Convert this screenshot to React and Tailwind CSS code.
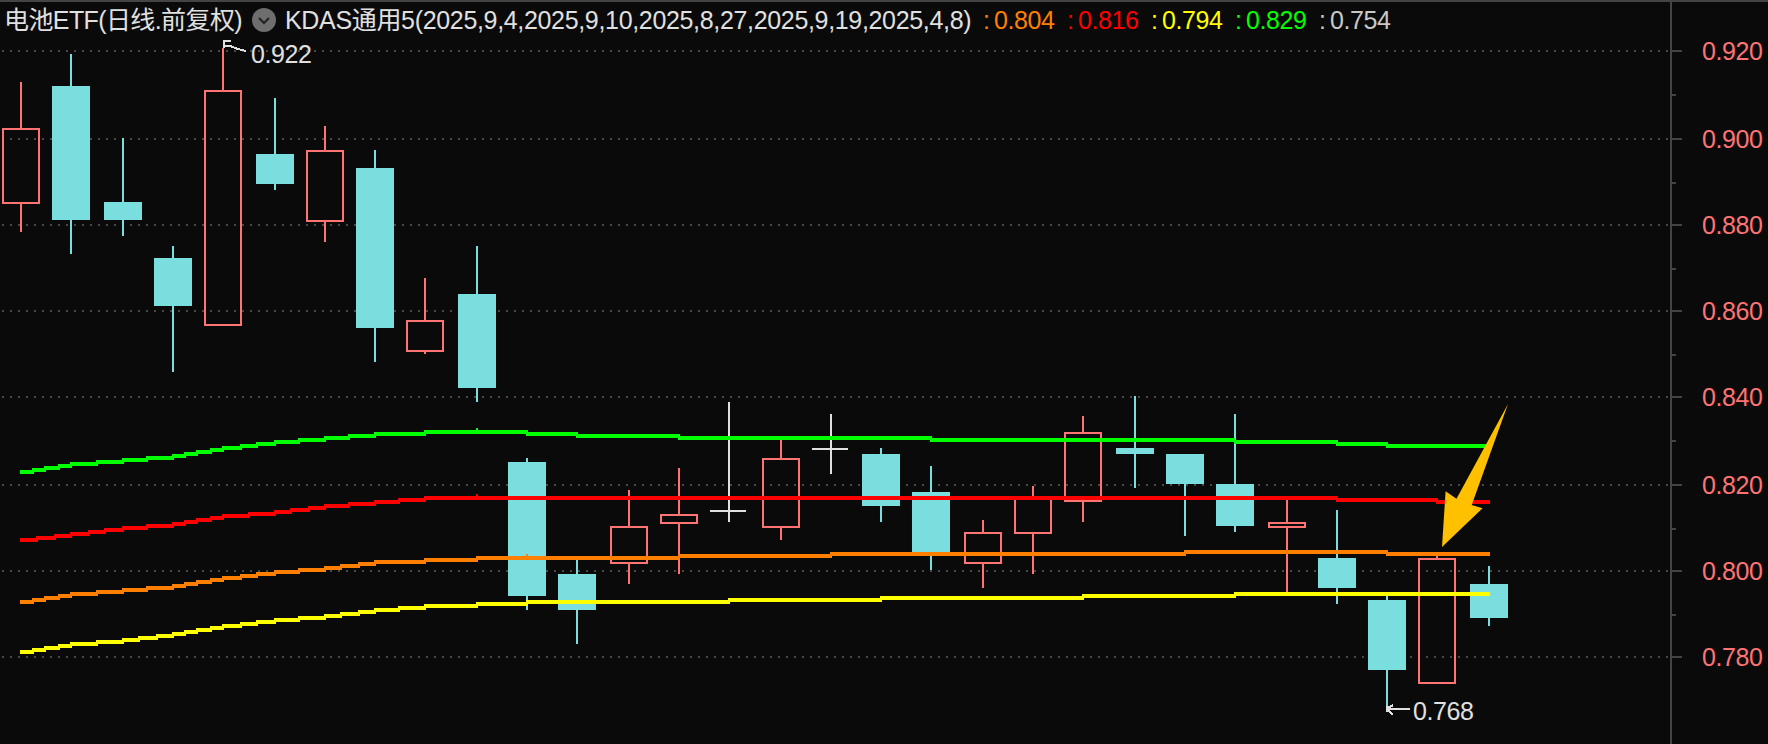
const candles = [
  ['h', 2, 128, 204, 82, 232], ['f', 52, 86, 220, 54, 254], ['f', 104, 202, 220, 138, 236], ['f', 154, 258, 306, 246, 372],
  ['h', 204, 90, 326, 48, 326], ['f', 256, 154, 184, 98, 190], ['h', 306, 150, 222, 126, 242], ['f', 356, 168, 328, 150, 362],
  ['h', 406, 320, 352, 278, 354], ['f', 458, 294, 388, 246, 402], ['f', 508, 462, 596, 458, 610], ['f', 558, 574, 610, 560, 644],
  ['h', 610, 526, 564, 490, 584], ['h', 660, 514, 524, 468, 574], ['d', 710, 510, 512, 402, 522], ['h', 762, 458, 528, 440, 540],
  ['d', 812, 448, 450, 414, 474], ['f', 862, 454, 506, 448, 522], ['f', 912, 492, 554, 466, 570], ['h', 964, 532, 564, 520, 588],
  ['h', 1014, 498, 534, 486, 574], ['h', 1064, 432, 502, 416, 522], ['f', 1116, 448, 454, 396, 488], ['f', 1166, 454, 484, 454, 536],
  ['f', 1216, 484, 526, 414, 532], ['h', 1268, 522, 528, 500, 592], ['f', 1318, 558, 588, 510, 604], ['f', 1368, 600, 670, 596, 706],
  ['h', 1418, 558, 684, 555, 684], ['f', 1470, 584, 618, 566, 626],
];

const lines = [
  { color: '#00ff00', segs: [[472,20,34],[470,32,46],[468,44,60],[466,58,72],[464,70,98],[462,96,124],[460,122,148],[458,146,174],[456,172,186],[454,184,198],[452,196,212],[450,210,224],[448,222,242],[446,240,258],[444,256,276],[442,274,300],[440,298,326],[438,324,350],[436,348,376],[434,374,426],[432,424,528],[434,526,578],[436,576,680],[438,678,932],[440,930,1235],[442,1234,1338],[444,1336,1388],[446,1386,1490]] },
  { color: '#ff0000', segs: [[540,20,38],[538,36,56],[536,54,72],[534,70,90],[532,88,106],[530,104,124],[528,122,148],[526,146,174],[524,172,186],[522,184,198],[520,196,212],[518,210,224],[516,222,250],[514,248,276],[512,274,292],[510,290,310],[508,308,326],[506,324,350],[504,348,376],[502,374,400],[500,398,426],[498,424,1338],[500,1336,1438],[502,1436,1490]] },
  { color: '#ff8000', segs: [[602,20,34],[600,32,46],[598,44,60],[596,58,72],[594,70,98],[592,96,124],[590,122,148],[588,146,174],[586,172,186],[584,184,198],[582,196,212],[580,210,224],[578,222,242],[576,240,258],[574,256,276],[572,274,300],[570,298,326],[568,324,342],[566,340,360],[564,358,376],[562,374,426],[560,424,478],[558,476,680],[556,678,832],[554,830,1186],[552,1184,1388],[554,1386,1490]] },
  { color: '#ffff00', segs: [[652,20,34],[650,32,46],[648,44,60],[646,58,72],[644,70,98],[642,96,124],[640,122,140],[638,138,158],[636,156,174],[634,172,186],[632,184,198],[630,196,212],[628,210,224],[626,222,242],[624,240,258],[622,256,276],[620,274,300],[618,298,326],[616,324,342],[614,340,360],[612,358,376],[610,374,400],[608,398,426],[606,424,478],[604,476,528],[602,526,730],[600,728,882],[598,880,1084],[596,1082,1236],[594,1234,1490]] },
];

const gridYs = [50, 138, 224, 310, 396, 484, 570, 656];

const values = [
  { v: '0.804', c: 'text-[#ff8000]' },
  { v: '0.816', c: 'text-[#ff0000]' },
  { v: '0.794', c: 'text-[#ffff00]' },
  { v: '0.829', c: 'text-[#00ff00]' },
  { v: '0.754', c: 'text-[#c8c8c8]' },
];

const ticks = [
  { m: 'mt-[48px]', label: '0.920' }, { m: 'mt-[42px]' }, { m: 'mt-[42px]', label: '0.900' }, { m: 'mt-[42px]' },
  { m: 'mt-[40px]', label: '0.880' }, { m: 'mt-[42px]' }, { m: 'mt-[40px]', label: '0.860' }, { m: 'mt-[42px]' },
  { m: 'mt-[40px]', label: '0.840' }, { m: 'mt-[42px]' }, { m: 'mt-[42px]', label: '0.820' }, { m: 'mt-[42px]' },
  { m: 'mt-[40px]', label: '0.800' }, { m: 'mt-[42px]' }, { m: 'mt-[40px]', label: '0.780' },
];

function Candle({ type, x, top, bottom, hi, lo }) {
  if (type === 'h') {
    return (
      <g fill="#ff7373">
        <rect x={x + 18} y={hi} width="2" height={top - hi} />
        <rect x={x + 18} y={bottom} width="2" height={Math.max(0, lo - bottom)} />
        <rect x={x + 1} y={top + 1} width="36" height={bottom - top - 2} fill="none" stroke="#ff7373" strokeWidth="2" />
      </g>
    );
  }
  if (type === 'd') {
    return (
      <g fill="#e0e0e0">
        <rect x={x + 18} y={hi} width="2" height={lo - hi} />
        <rect x={x} y={top} width="36" height="2" />
      </g>
    );
  }
  return (
    <g fill="#7adede">
      <rect x={x + 18} y={hi} width="2" height={lo - hi} />
      <rect x={x} y={top} width="38" height={bottom - top} />
    </g>
  );
}

function Chart() {
  return (
    <svg viewBox="0 38 1670 704" width="1670" height="704" className="block" shapeRendering="crispEdges">
      {gridYs.map((y) => (
        <line key={y} x1="2" x2="1668" y1={y + 1} y2={y + 1} stroke="#484848" strokeWidth="2" strokeDasharray="2 6" />
      ))}
      {candles.map(([type, x, top, bottom, hi, lo]) => (
        <Candle key={x} type={type} x={x} top={top} bottom={bottom} hi={hi} lo={lo} />
      ))}
      <rect x="476" y="428" width="2" height="2" fill="#00ff00" />
      <rect x="476" y="494" width="2" height="2" fill="#ff0000" />
      <rect x="526" y="554" width="2" height="2" fill="#ff8000" />
      {lines.map((l) => (
        <g key={l.color} fill={l.color}>
          {l.segs.map(([y, a, b]) => (
            <rect key={`${y}-${a}`} x={a} y={y - 2} width={b - a} height="4" />
          ))}
        </g>
      ))}
      <g fill="none" stroke="#e0e0e0" strokeWidth="2">
        <path d="M224 48V41H231M224 46H230L238 49L246 51" />
        <path d="M1388 709H1410M1387 709L1393 705M1387 709L1393 715" />
      </g>
      <rect x="1386" y="706" width="4" height="6" fill="#e0e0e0" />
      <polygon shapeRendering="auto" points="1508,404 1456.5,498.7 1445.6,491.3 1442,547 1482.5,508.3 1471.7,505" fill="#ffc000" />
    </svg>
  );
}

function Info() {
  return (
    <svg width="24" height="24" viewBox="0 0 24 24" className="mx-[9px] shrink-0">
      <circle cx="12" cy="12" r="12" fill="#6e6e6e" />
      <path d="M7 10L12 15L17 10" fill="none" stroke="#222222" strokeWidth="2" />
    </svg>
  );
}

export default function App() {
  return (
    <div className="w-[1768px] h-[744px] overflow-hidden bg-[#0a0a0a] border-t-2 border-[#444444] flex font-['Liberation_Sans','Noto_Sans_CJK_SC',sans-serif] text-[25px] leading-none text-[#e0e0e0]">
      <div className="w-[1670px] shrink-0 flex flex-col relative">
        <div className="h-[36px] shrink-0 flex items-center pl-[4px] whitespace-nowrap">
          <span className="w-[239px] tracking-[-0.6px]">电池ETF(日线.前复权)</span>
          <Info />
          <span className="w-[698px] tracking-[-0.33px]">KDAS通用5(2025,9,4,2025,9,10,2025,8,27,2025,9,19,2025,4,8)</span>
          {values.map(({ v, c }) => (
            <span key={v} className={`w-[84px] shrink-0 flex ${c}`}>
              <span className="w-[11px]">:</span>
              <span className="tracking-[-0.4px]">{v}</span>
            </span>
          ))}
        </div>
        <Chart />
        <span className="absolute left-[251px] top-[40px] tracking-[-0.4px]">0.922</span>
        <span className="absolute left-[1413px] top-[697px] tracking-[-0.4px]">0.768</span>
      </div>
      <div className="flex-1 border-l-2 border-[#444444] flex flex-col text-[#ff7373]">
        {ticks.map(({ m, label }, i) => (
          <div key={i} className={`h-[2px] flex items-center ${m}`}>
            <div className={label ? 'w-[10px] h-[2px] bg-[#444444]' : 'w-[4px] h-[2px] bg-[#444444]'} />
            {label && <span className="ml-[20px] tracking-[-0.4px]">{label}</span>}
          </div>
        ))}
      </div>
    </div>
  );
}
